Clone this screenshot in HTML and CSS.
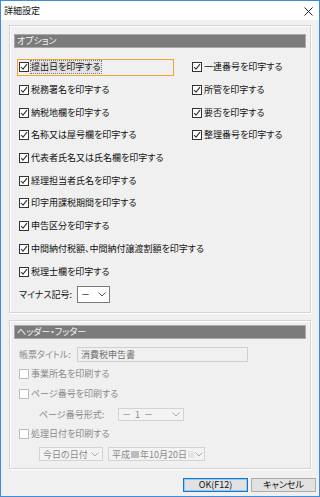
FILE: index.html
```html
<!DOCTYPE html>
<html lang="ja">
<head>
<meta charset="utf-8">
<link rel="stylesheet" href="styles.css">
</head>
<body>
<div class="window">
  <div class="titlebar">
    <span class="title">詳細設定</span>
    <svg class="close" width="9" height="9" viewBox="0 0 9 9"><path d="M0.5 0.5L8.5 8.5M8.5 0.5L0.5 8.5" stroke="#222" stroke-width="1"/></svg>
  </div>
  <div class="body">
    <section class="group g1">
      <div class="ghead">オプション</div>
      <div class="opts">
        <label class="cb focus"><span class="box"><svg width="8" height="8" viewBox="0 0 8 8"><path d="M1 4L3 6.2L7 1.2" fill="none" stroke="#333" stroke-width="1.1"/></svg></span><span class="txt dotted">提出日を印字する</span></label>
        <label class="cb"><span class="box"><svg width="8" height="8" viewBox="0 0 8 8"><path d="M1 4L3 6.2L7 1.2" fill="none" stroke="#333" stroke-width="1.1"/></svg></span><span class="txt">一連番号を印字する</span></label>
        <label class="cb"><span class="box"><svg width="8" height="8" viewBox="0 0 8 8"><path d="M1 4L3 6.2L7 1.2" fill="none" stroke="#333" stroke-width="1.1"/></svg></span><span class="txt">税務署名を印字する</span></label>
        <label class="cb"><span class="box"><svg width="8" height="8" viewBox="0 0 8 8"><path d="M1 4L3 6.2L7 1.2" fill="none" stroke="#333" stroke-width="1.1"/></svg></span><span class="txt">所管を印字する</span></label>
        <label class="cb"><span class="box"><svg width="8" height="8" viewBox="0 0 8 8"><path d="M1 4L3 6.2L7 1.2" fill="none" stroke="#333" stroke-width="1.1"/></svg></span><span class="txt">納税地欄を印字する</span></label>
        <label class="cb"><span class="box"><svg width="8" height="8" viewBox="0 0 8 8"><path d="M1 4L3 6.2L7 1.2" fill="none" stroke="#333" stroke-width="1.1"/></svg></span><span class="txt">要否を印字する</span></label>
        <label class="cb"><span class="box"><svg width="8" height="8" viewBox="0 0 8 8"><path d="M1 4L3 6.2L7 1.2" fill="none" stroke="#333" stroke-width="1.1"/></svg></span><span class="txt">名称又は屋号欄を印字する</span></label>
        <label class="cb"><span class="box"><svg width="8" height="8" viewBox="0 0 8 8"><path d="M1 4L3 6.2L7 1.2" fill="none" stroke="#333" stroke-width="1.1"/></svg></span><span class="txt">整理番号を印字する</span></label>
        <label class="cb wide"><span class="box"><svg width="8" height="8" viewBox="0 0 8 8"><path d="M1 4L3 6.2L7 1.2" fill="none" stroke="#333" stroke-width="1.1"/></svg></span><span class="txt">代表者氏名又は氏名欄を印字する</span></label>
        <label class="cb wide"><span class="box"><svg width="8" height="8" viewBox="0 0 8 8"><path d="M1 4L3 6.2L7 1.2" fill="none" stroke="#333" stroke-width="1.1"/></svg></span><span class="txt">経理担当者氏名を印字する</span></label>
        <label class="cb wide"><span class="box"><svg width="8" height="8" viewBox="0 0 8 8"><path d="M1 4L3 6.2L7 1.2" fill="none" stroke="#333" stroke-width="1.1"/></svg></span><span class="txt">印字用課税期間を印字する</span></label>
        <label class="cb wide"><span class="box"><svg width="8" height="8" viewBox="0 0 8 8"><path d="M1 4L3 6.2L7 1.2" fill="none" stroke="#333" stroke-width="1.1"/></svg></span><span class="txt">申告区分を印字する</span></label>
        <label class="cb wide"><span class="box"><svg width="8" height="8" viewBox="0 0 8 8"><path d="M1 4L3 6.2L7 1.2" fill="none" stroke="#333" stroke-width="1.1"/></svg></span><span class="txt">中間納付税額、中間納付譲渡割額を印字する</span></label>
        <label class="cb wide"><span class="box"><svg width="8" height="8" viewBox="0 0 8 8"><path d="M1 4L3 6.2L7 1.2" fill="none" stroke="#333" stroke-width="1.1"/></svg></span><span class="txt">税理士欄を印字する</span></label>
        <div class="minus wide">
          <span class="mlabel">マイナス記号:</span>
          <span class="select">
            <span class="sval">－</span>
            <svg class="chev" width="8" height="5" viewBox="0 0 8 5"><path d="M0.5 0.5L4 4L7.5 0.5" fill="none" stroke="#555" stroke-width="1"/></svg>
          </span>
        </div>
      </div>
    </section>

    <section class="group g2">
      <div class="ghead">ヘッダー・フッター</div>
      <div class="rows">
        <div class="row">
          <span class="dlabel w58">帳票タイトル:</span>
          <span class="input">消費税申告書</span>
        </div>
        <div class="row">
          <label class="cb dis"><span class="box"></span><span class="txt">事業所名を印刷する</span></label>
        </div>
        <div class="row">
          <label class="cb dis"><span class="box"></span><span class="txt">ページ番号を印刷する</span></label>
        </div>
        <div class="row indent">
          <span class="dlabel w79">ページ番号形式:</span>
          <span class="dselect s1">
            <span class="sval">－ 1 －</span>
            <svg class="chev" width="8" height="5" viewBox="0 0 8 5"><path d="M0.5 0.5L4 4L7.5 0.5" fill="none" stroke="#aaa" stroke-width="1"/></svg>
          </span>
        </div>
        <div class="row">
          <label class="cb dis"><span class="box"></span><span class="txt">処理日付を印刷する</span></label>
        </div>
        <div class="row indent gap5">
          <span class="dselect s2">
            <span class="sval">今日の日付</span>
            <svg class="chev" width="8" height="5" viewBox="0 0 8 5"><path d="M0.5 0.5L4 4L7.5 0.5" fill="none" stroke="#aaa" stroke-width="1"/></svg>
          </span>
          <span class="dselect s3">
            <span class="sval">平成<i class="redact"></i>年10月20日<i class="redact light"></i></span>
            <svg class="chev" width="8" height="5" viewBox="0 0 8 5"><path d="M0.5 0.5L4 4L7.5 0.5" fill="none" stroke="#aaa" stroke-width="1"/></svg>
          </span>
        </div>
      </div>
    </section>

    <div class="buttons">
      <button class="btn ok">OK(F12)</button>
      <button class="btn">キャンセル</button>
    </div>
  </div>
</div>
</body>
</html>
```

FILE: styles.css
```css
* { box-sizing: border-box; }
html, body { margin: 0; padding: 0; }
body {
  width: 320px;
  height: 497px;
  overflow: hidden;
  font-family: "Noto Sans CJK JP", "Noto Sans", sans-serif;
  font-size: 9px;
  font-feature-settings: "palt";
  color: #111;
}
.window {
  width: 320px;
  height: 497px;
  border: 1px solid #3b8de0;
  background: #f0f0f0;
  display: flex;
  flex-direction: column;
}
.titlebar {
  height: 19px;
  background: #fff;
  display: flex;
  align-items: center;
  justify-content: space-between;
  padding: 0 6px 0 3px;
}
.title { line-height: 19px; color: #111; }
.close { display: block; margin-top: 1px; }

.body {
  padding: 5px 8px 0 8px;
  display: flex;
  flex-direction: column;
}
.group {
  border: 1px solid #d3d3d3;
  box-shadow: inset 1px 1px 0 #fff, 1px 1px 0 #fff;
  padding: 0 4px;
}
.g1 { height: 288px; padding-top: 8px; }
.g2 { height: 149px; margin-top: 7px; padding-top: 4px; }
.ghead {
  height: 14px;
  background: #7b7b7b;
  border: 1px solid #a9a9a9;
  color: #f4f4f4;
  line-height: 12px;
  padding-left: 2px;
}
.opts {
  margin-top: 8px;
  padding-left: 3px;
  display: grid;
  grid-template-columns: 173px 1fr;
  grid-auto-rows: 22.7px;
  align-items: center;
}
.wide { grid-column: 1 / -1; }
.cb {
  display: flex;
  align-items: center;
  gap: 2px;
  height: 17px;
  border: 1px solid transparent;
  padding-left: 1px;
  white-space: nowrap;
}
.cb.focus { border-color: #f2a333; width: 157px; }
.box {
  width: 10px;
  height: 10px;
  border: 1px solid #333;
  background: #fff;
  display: flex;
  align-items: center;
  justify-content: center;
  flex: none;
}
.box svg { display: block; }
.txt { line-height: 12px; }
.txt.dotted { outline: 1px dotted #777; background: rgba(0,0,0,0.06); }

.minus { display: flex; align-items: center; gap: 4px; padding-left: 2px; }
.mlabel { width: 54px; }
.select {
  width: 33px;
  height: 17px;
  background: #fff;
  border: 1px solid #7a7a7a;
  display: flex;
  align-items: center;
  justify-content: space-between;
  padding: 0 3px 0 3px;
}
.chev { display: block; flex: none; }

.rows { margin-top: 5px; padding-left: 3px; }
.row { height: 20px; display: flex; align-items: center; }
.row .cb { border: none; padding-left: 2px; }
.indent { padding-left: 22px; }
.gap5 { gap: 5px; }
.dlabel { color: #8a8a8a; padding-left: 2px; white-space: nowrap; }
.indent .dlabel { padding-left: 0; }
.w58 { width: 60px; }
.w79 { width: 79px; }
.input {
  width: 171px;
  height: 15px;
  border: 1px solid #cfcfcf;
  background: #f0f0f0;
  color: #6e6e6e;
  line-height: 13px;
  padding-left: 3px;
}
.cb.dis .box { border-color: #bdbdbd; background: #fff; }
.cb.dis .txt { color: #8a8a8a; }
.dselect {
  height: 13px;
  border: 1px solid #d3d3d3;
  background: #f3f3f3;
  color: #8a8a8a;
  display: flex;
  align-items: center;
  justify-content: space-between;
  padding: 0 3px 0 3px;
}
.s1 { width: 66px; height: 13px; }
.s1 .sval { letter-spacing: 1px; }
.s2 { width: 64px; height: 14px; }
.s3 { width: 97px; height: 14px; }
.sval { display: flex; align-items: center; white-space: nowrap; line-height: 11px; }
.redact { display: inline-block; width: 8px; height: 7px; background: #bcbcbc; margin: 0 1px; }
.redact.light { width: 6px; background: #e4e4e4; margin-left: 1px; }

.buttons {
  margin-top: 9px;
  margin-right: -5px;
  display: flex;
  justify-content: flex-end;
  gap: 3px;
}
.btn {
  width: 65px;
  height: 14px;
  padding: 0;
  font-family: inherit;
  font-size: 9px;
  font-feature-settings: "palt";
  line-height: 12px;
  color: #111;
  background: #e1e1e1;
  border: 1px solid #adadad;
  border-radius: 0;
}
.btn.ok { border-color: #0a78d7; box-shadow: inset 0 0 0 1px #9cc8ef; }
```
